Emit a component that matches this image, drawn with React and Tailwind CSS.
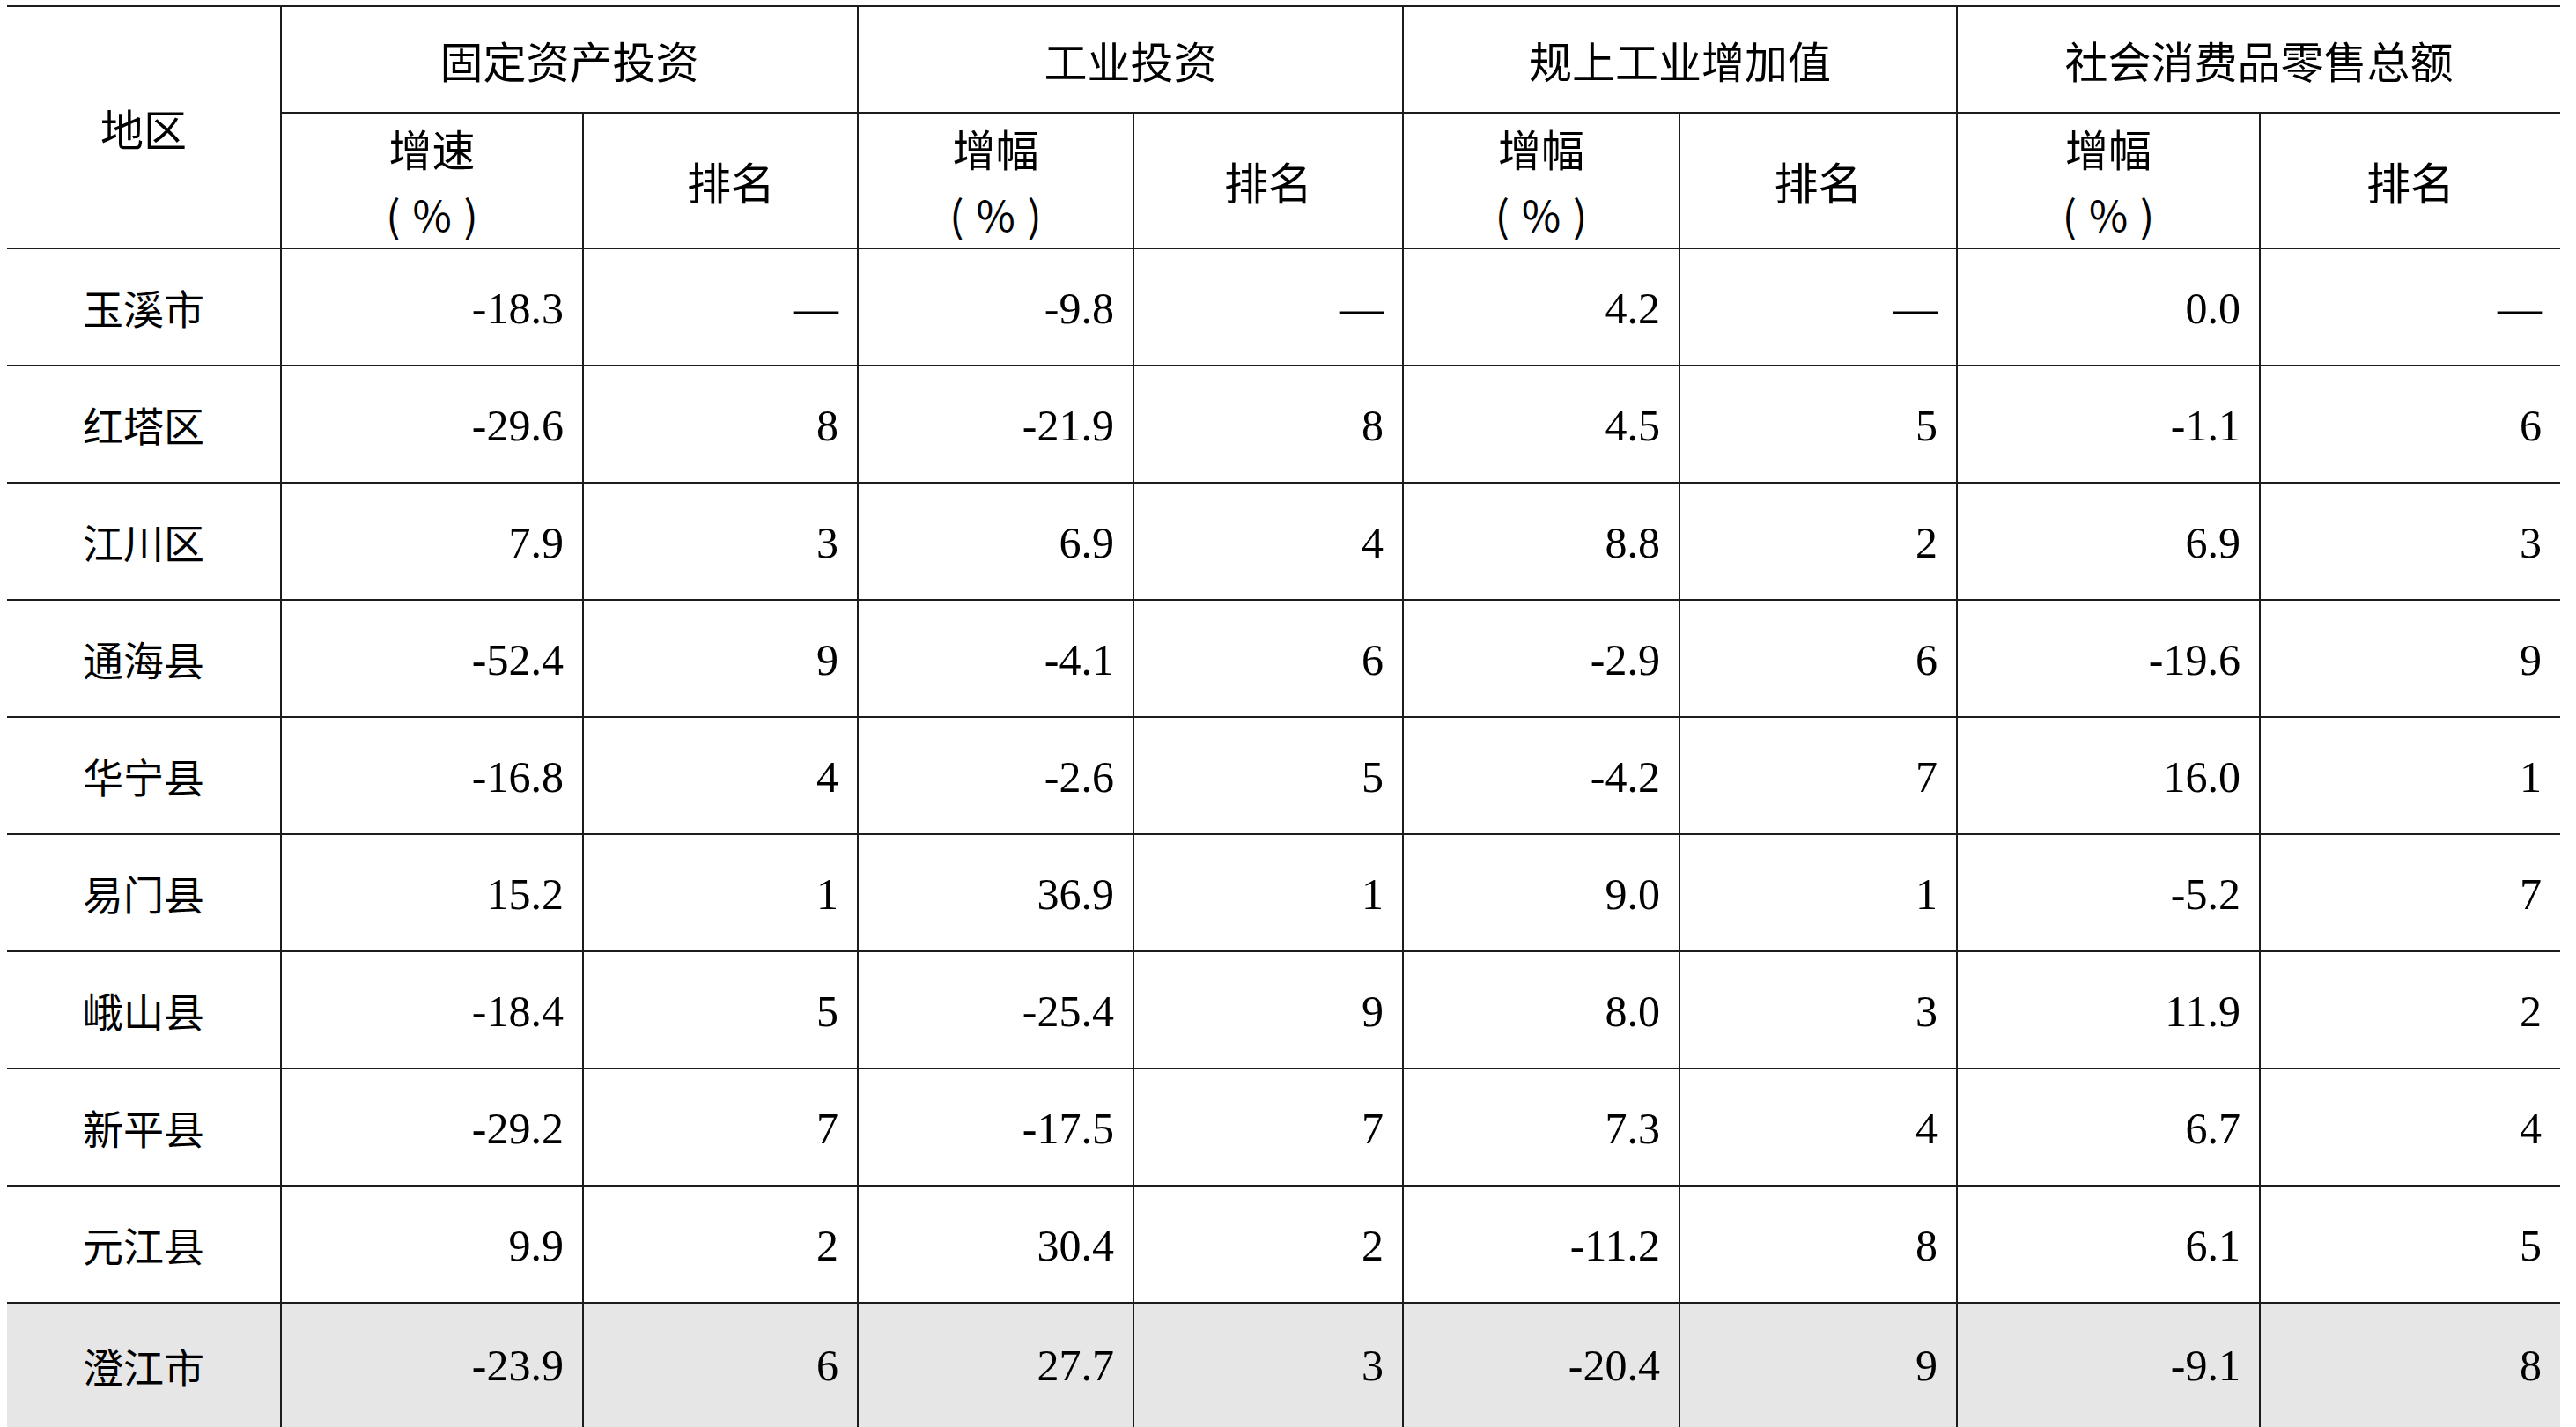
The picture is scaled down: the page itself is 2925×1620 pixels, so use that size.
import React from "react";

const rows = [
  ["玉溪市", "-18.3", "—", "-9.8", "—", "4.2", "—", "0.0", "—"],
  ["红塔区", "-29.6", "8", "-21.9", "8", "4.5", "5", "-1.1", "6"],
  ["江川区", "7.9", "3", "6.9", "4", "8.8", "2", "6.9", "3"],
  ["通海县", "-52.4", "9", "-4.1", "6", "-2.9", "6", "-19.6", "9"],
  ["华宁县", "-16.8", "4", "-2.6", "5", "-4.2", "7", "16.0", "1"],
  ["易门县", "15.2", "1", "36.9", "1", "9.0", "1", "-5.2", "7"],
  ["峨山县", "-18.4", "5", "-25.4", "9", "8.0", "3", "11.9", "2"],
  ["新平县", "-29.2", "7", "-17.5", "7", "7.3", "4", "6.7", "4"],
  ["元江县", "9.9", "2", "30.4", "2", "-11.2", "8", "6.1", "5"],
  ["澄江市", "-23.9", "6", "27.7", "3", "-20.4", "9", "-9.1", "8"],
];

const groups = ["固定资产投资", "工业投资", "规上工业增加值", "社会消费品零售总额"];
const subLabels = ["增速", "增幅", "增幅", "增幅"];

function Sub({ label }) {
  return (
    <div className="flex flex-col items-center justify-center border-t-2 border-l-2 border-[#1c1c1c] font-['Noto_Sans_CJK_SC','Noto_Sans',sans-serif] text-[49px] leading-[75px] text-black">
      <span>{label}</span>
      <span className="flex items-center gap-[14px] text-[48px]">
        <span>(</span>
        <span>%</span>
        <span>)</span>
      </span>
    </div>
  );
}

export default function App() {
  return (
    <div className="min-h-[1620px] w-[2925px] overflow-hidden bg-white pl-[8px] pt-[6px]">
      <div className="grid grid-cols-[310px_343px_312px_313px_306px_314px_315px_344px_342px] grid-rows-[121px_154px_repeat(9,133px)_160px]">
        <div className="row-span-2 flex items-center justify-center border-t-2 border-[#1c1c1c] font-['Noto_Sans_CJK_SC','Noto_Sans',sans-serif] text-[49px] text-black">
          地区
        </div>
        {groups.map((g) => (
          <div
            key={g}
            className="col-span-2 flex items-center justify-center border-t-2 border-l-2 border-[#1c1c1c] font-['Noto_Sans_CJK_SC','Noto_Sans',sans-serif] text-[49px] text-black"
          >
            {g}
          </div>
        ))}
        {subLabels.map((s, i) => (
          <React.Fragment key={i}>
            <Sub label={s} />
            <div
              className={
                i === 0
                  ? "flex items-center justify-center border-t-2 border-l-2 border-[#1c1c1c] pl-[24px] font-['Noto_Sans_CJK_SC','Noto_Sans',sans-serif] text-[50px] text-black"
                  : "flex items-center justify-center border-t-2 border-l-2 border-[#1c1c1c] font-['Noto_Sans_CJK_SC','Noto_Sans',sans-serif] text-[50px] text-black"
              }
            >
              排名
            </div>
          </React.Fragment>
        ))}
        {rows.map((r, ri) => {
          const last = ri === rows.length - 1;
          return (
            <React.Fragment key={ri}>
              <div
                className={
                  last
                    ? "flex items-center justify-center border-t-2 border-[#1c1c1c] bg-[#e6e6e6] pb-[18px] font-['Noto_Sans_CJK_SC','Noto_Sans',sans-serif] text-[46px] text-black"
                    : "flex items-center justify-center border-t-2 border-[#1c1c1c] bg-white font-['Noto_Sans_CJK_SC','Noto_Sans',sans-serif] text-[46px] text-black"
                }
              >
                {r[0]}
              </div>
              {r.slice(1).map((v, ci) => (
                <div
                  key={ci}
                  className={
                    last
                      ? "flex items-center justify-end border-t-2 border-l-2 border-[#1c1c1c] bg-[#e6e6e6] pr-[21px] pt-[4px] pb-[22px] font-['Liberation_Serif','Noto_Sans_CJK_SC',serif] text-[50px] text-black"
                      : "flex items-center justify-end border-t-2 border-l-2 border-[#1c1c1c] bg-white pr-[21px] pt-[4px] font-['Liberation_Serif','Noto_Sans_CJK_SC',serif] text-[50px] text-black"
                  }
                >
                  {v}
                </div>
              ))}
            </React.Fragment>
          );
        })}
      </div>
    </div>
  );
}
